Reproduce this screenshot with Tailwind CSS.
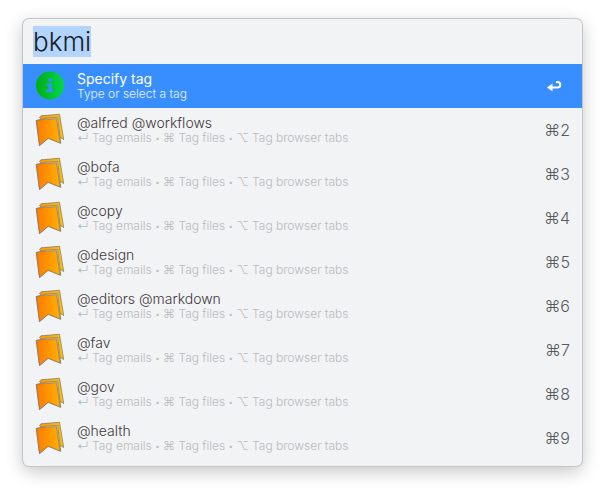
<!DOCTYPE html>
<html lang="en">
<head>
<meta charset="utf-8">
<title>bkmi</title>
<script src="https://cdn.jsdelivr.net/npm/@tailwindcss/browser@4"></script>
</head>
<body class="min-h-screen bg-white px-[23px] pt-[19px] pb-6 font-['Inter','DejaVu_Sans',sans-serif]">
<svg class="absolute size-0" aria-hidden="true">
  <defs>
    <linearGradient id="orange" x1="0" x2="1" y1="0" y2="0"><stop offset="0" stop-color="#ff7a00"/><stop offset="1" stop-color="#ffb000"/></linearGradient>
    <linearGradient id="gold" x1="0" x2="1" y1="0" y2="0"><stop offset="0" stop-color="#ff9a00"/><stop offset="1" stop-color="#ffc400"/></linearGradient>
    <linearGradient id="green" x1="0" x2="1" y1="0" y2="0"><stop offset="0" stop-color="#00ad12"/><stop offset="1" stop-color="#00d84c"/></linearGradient>
  </defs>
</svg>
<main class="overflow-hidden rounded-md bg-[#f1f3f5] pb-1.5 shadow-[0_0_0_1px_#c4c5c6,0_5px_18px_rgba(0,0,0,0.24)]">
  <input type="text" id="query" aria-label="Search" value="bkmi" autocomplete="off" spellcheck="false" class="block h-[45px] w-full bg-transparent px-2.5 text-[26px] leading-[33px] font-light text-[#17202a] outline-none selection:bg-[#b3d5fc] selection:text-[#17202a]">
  <ul id="results">
    <li>
      <button type="button" class="flex h-11 w-full items-center bg-[#388eff] px-3 text-left text-white">
        <svg class="size-[30px] shrink-0" viewBox="0 0 30 30" aria-hidden="true">
          <circle cx="15" cy="14.500" r="14" fill="url(#green)"/>
          <circle cx="15" cy="9" r="1.900" fill="#388eff"/>
          <path d="M12 12.500h4.800v6.300h1.700v2.400h-7v-2.400h1.900V15H12z" fill="#388eff"/>
        </svg>
        <span class="ml-3 flex-1">
          <span class="block text-sm leading-4">Specify tag</span>
          <span class="block text-xs leading-[14px] font-light text-[#e8f2ff]">Type or select a tag</span>
        </span>
        <svg class="mr-2 h-3.5 w-4" viewBox="0 0 16 14" fill="none" stroke="#fff" stroke-width="2" aria-label="Return"><path d="M10 3h1.500a2.700 2.700 0 0 1 0 5.500H4"/><path d="M6.500 4.500v8L1 8.500z" fill="#fff" stroke="none"/></svg>
      </button>
    </li>
  </ul>
</main>
<script>
  const tags = ['@alfred @workflows', '@bofa', '@copy', '@design', '@editors @markdown', '@fav', '@gov', '@health'];
  const dot = '<span class="align-[1px] text-[8px] leading-none">•</span>';
  document.getElementById('results').insertAdjacentHTML('beforeend', tags.map((tag, i) => `
    <li>
      <button type="button" class="flex h-11 w-full items-center px-3 text-left">
        <svg class="h-[34px] w-[30px] shrink-0" viewBox="0 0 30 34" stroke="#77736d" stroke-width=".7" stroke-linejoin="round" aria-hidden="true">
          <path d="M4.500 4.500 6 2.800 24.500 1.300l4.200 25.200-4-2.500z" fill="url(#gold)"/>
          <path d="M1.300 7.500Q10 4.200 22.600 4.400L25.800 30.200l-12.600-5L4.500 32.500z" fill="#f1ead8"/>
          <path d="M1.300 7.500Q10 5.400 21.600 5.800l3.600 24.400-12-5L4.500 32.500z" fill="url(#orange)"/>
        </svg>
        <span class="ml-3 flex-1">
          <span class="block text-sm leading-4 font-light text-[#43383b]">${tag}</span>
          <span class="block text-xs leading-[14px] font-light text-[#b9bbbd]">↵ Tag emails ${dot} ⌘ Tag files ${dot} ⌥ Tag browser tabs</span>
        </span>
        <span class="text-base font-light text-[#565a60]">⌘${i + 2}</span>
      </button>
    </li>`).join(''));
  const query = document.getElementById('query');
  query.focus();
  query.select();
</script>
</body>
</html>
